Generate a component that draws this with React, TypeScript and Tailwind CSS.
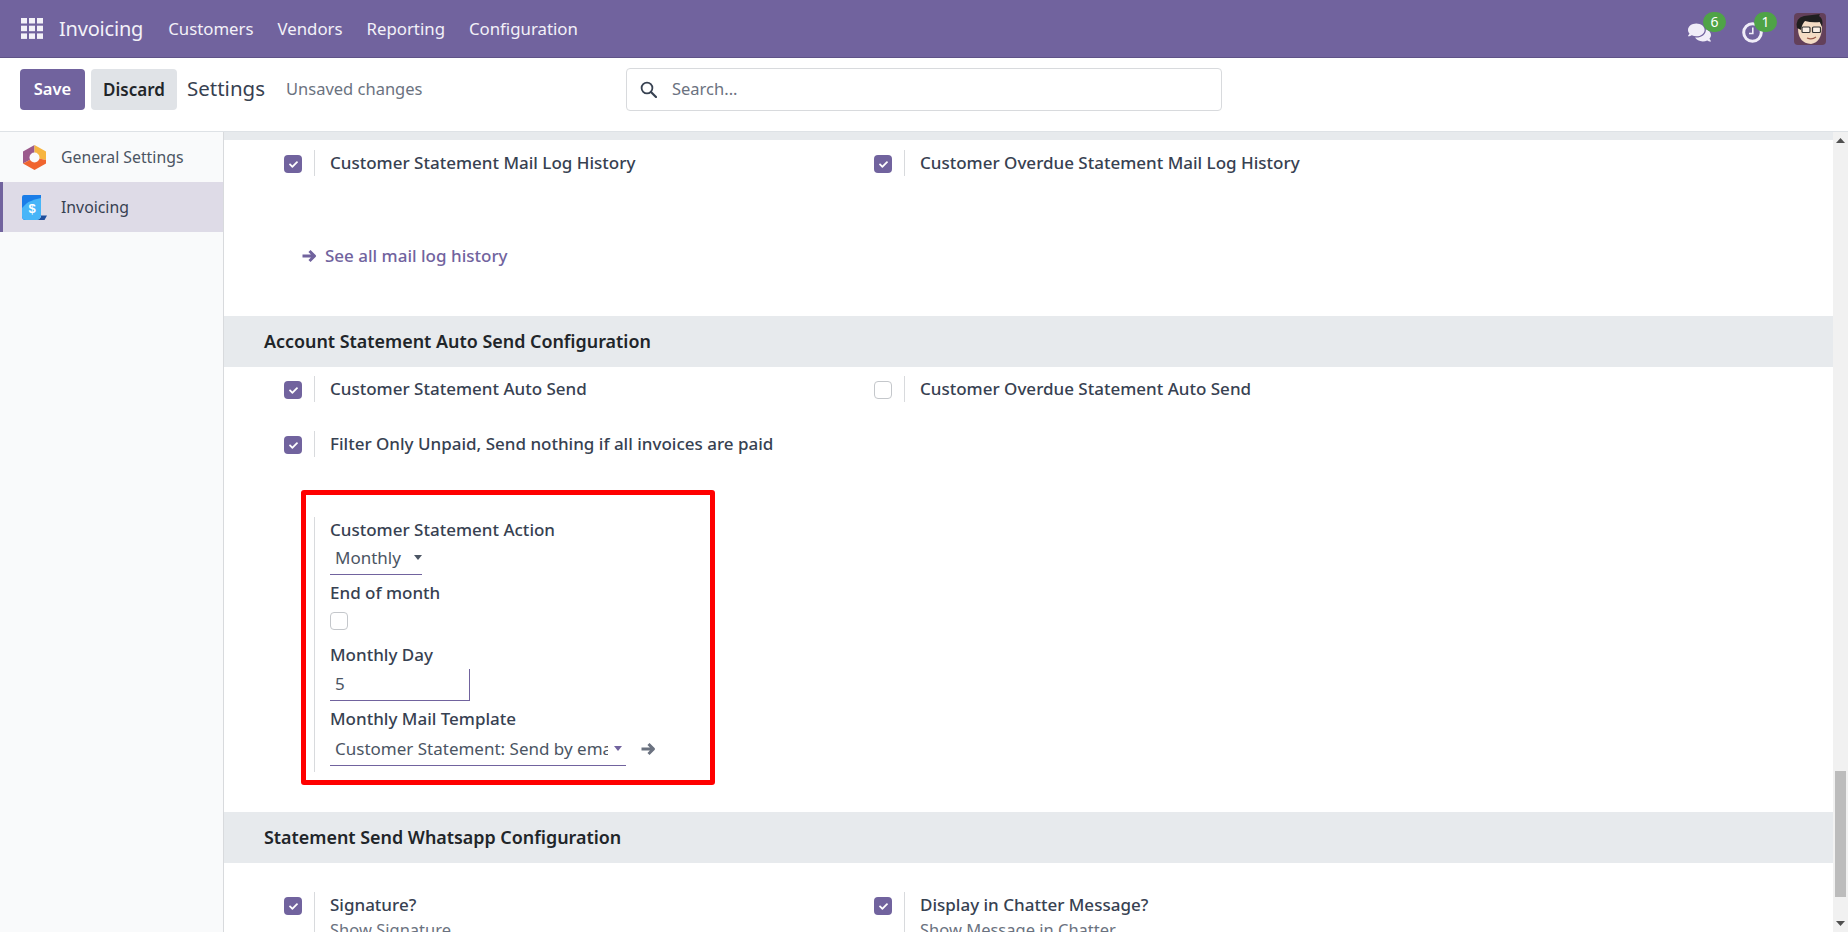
import { FaCheck, FaComments } from "react-icons/fa";

const Check = ({ on }: { on?: boolean }) =>
  on ? (
    <span className="w-[18px] h-[18px] rounded-[4px] bg-[#71639e] flex items-center justify-center text-white shrink-0">
      <FaCheck size={9} />
    </span>
  ) : (
    <span className="block w-[18px] h-[18px] rounded-[4px] border border-[#c4c7cb] bg-white shrink-0" />
  );

const Setting = ({ on, label, sub }: { on?: boolean; label: string; sub?: string }) => (
  <div className="flex w-[590px] items-start">
    <div className="w-[30px] pt-[5px] shrink-0">
      <Check on={on} />
    </div>
    <div className="border-l border-[#d8dadd] pl-[15px] min-h-[26px]">
      <div className="text-[17px] leading-[26px] font-medium text-[#374151] whitespace-nowrap">{label}</div>
      {sub && <div className="text-[16.5px] leading-[24px] text-[#6b7280] whitespace-nowrap">{sub}</div>}
    </div>
  </div>
);

const Band = ({ title }: { title: string }) => (
  <div className="h-[51px] bg-[#e7eaed] flex items-center pl-[40px] text-[17.9px] font-semibold text-[#212529]">
    {title}
  </div>
);

const Label = ({ children }: { children: string }) => (
  <div className="text-[17px] leading-[26px] font-medium text-[#374151]">{children}</div>
);

const Caret = ({ color = "#4b5563" }: { color?: string }) => (
  <svg width="8" height="5" viewBox="0 0 8 5" className="shrink-0">
    <path d="M0 0h8L4 5z" fill={color} />
  </svg>
);

const FatArrow = ({ color, className }: { color: string; className?: string }) => (
  <svg width="16" height="16" viewBox="0 0 16 16" className={className}>
    <path d="M1.500 8H13M8.500 3l5 5-5 5" stroke={color} strokeWidth="3" fill="none" strokeLinejoin="round" />
  </svg>
);

const AppsIcon = () => (
  <svg width="22" height="21" viewBox="0 0 22 21" className="shrink-0">
    <g fill="#f3f1f8">
      <rect x="0" y="0" width="6" height="5.500" />
      <rect x="8" y="0" width="6" height="5.500" />
      <rect x="16" y="0" width="6" height="5.500" />
      <rect x="0" y="7.700" width="6" height="5.500" />
      <rect x="8" y="7.700" width="6" height="5.500" />
      <rect x="16" y="7.700" width="6" height="5.500" />
      <rect x="0" y="15.400" width="6" height="5.500" />
      <rect x="8" y="15.400" width="6" height="5.500" />
      <rect x="16" y="15.400" width="6" height="5.500" />
    </g>
  </svg>
);

const ClockIcon = () => (
  <svg width="21" height="21" viewBox="0 0 21 21" className="mt-[9px]">
    <circle cx="10.500" cy="10.500" r="8.800" stroke="#f0edf8" strokeWidth="3" fill="none" />
    <path d="M10.800 5.500V11.500H7" stroke="#f0edf8" strokeWidth="1.600" fill="none" />
  </svg>
);

const SearchIcon = () => (
  <svg width="17" height="17" viewBox="0 0 17 17" className="shrink-0">
    <circle cx="7" cy="7" r="5.400" stroke="#374151" strokeWidth="1.800" fill="none" />
    <path d="M11 11l5 5" stroke="#374151" strokeWidth="2.200" strokeLinecap="round" />
  </svg>
);

const SettingsLogo = () => (
  <svg width="23" height="25" viewBox="0 0 23 25" className="shrink-0">
    <path d="M11.500 0 0 6.500V18.500L11.500 12.500z" fill="#9b5a8c" />
    <path d="M11.500 0 23 6.500V15L11.500 12.500z" fill="#f7b53f" />
    <path d="M0 18.500 11.500 25 23 18.500V15L11.500 12.500z" fill="#f0652f" />
    <circle cx="11.500" cy="12.500" r="5" fill="#f9fafb" />
  </svg>
);

const InvoiceLogo = () => (
  <svg width="25" height="25" viewBox="0 0 25 25" className="shrink-0">
    <path d="M2 0H19V21H14L7 25H3Q0 25 0 21V2Q0 0 2 0z" fill="#1a7de8" />
    <path d="M7 25H22.500L25 20.500H19V22Q17 25 14 25z" fill="#1f4f9e" />
    <path d="M0 13Q6 5 19 3V20Q19 25 14 25H4Q0 25 0 21z" fill="#47b5f8" />
    <text x="10" y="18" textAnchor="middle" fontSize="13" fontWeight="700" fill="#fff" fontFamily="Liberation Sans, sans-serif">$</text>
  </svg>
);

const Avatar = () => (
  <svg width="32" height="32" viewBox="0 0 32 32" className="rounded-[4px] shrink-0">
    <rect width="32" height="32" fill="#63405a" />
    <path d="M4 15Q4 30 17 31Q28 29 28 13L25 8H9z" fill="#f4dcc4" />
    <path d="M3 15Q1 5 10 3L26 1L25 3Q30 6 28 14L26 9Q18 10 11 8Q8 11 7 17z" fill="#1f1f1f" />
    <rect x="8" y="14" width="8" height="5.500" rx="1" fill="#ffffff" fillOpacity=".55" stroke="#333" strokeWidth="1.200" />
    <rect x="18.500" y="14" width="8" height="5.500" rx="1" fill="#ffffff" fillOpacity=".55" stroke="#333" strokeWidth="1.200" />
    <path d="M13 25Q18 27 22 24" stroke="#9a5a48" strokeWidth="1.200" fill="none" />
  </svg>
);

export default function App() {
  return (
    <div className="h-[932px] overflow-hidden flex flex-col bg-white font-['Noto_Sans',sans-serif]">
      <nav className="h-[58px] shrink-0 bg-[#71639e] border-b border-[#5f5387] flex items-center text-white pl-[21px] pr-[22px]">
        <AppsIcon />
        <span className="ml-[16px] text-[20px] tracking-[-0.2px] text-[#f3f1f8]">Invoicing</span>
        <div className="flex gap-[24px] ml-[25px] text-[16.8px] text-[#f3f1f8]">
          <span>Customers</span>
          <span>Vendors</span>
          <span>Reporting</span>
          <span>Configuration</span>
        </div>
        <div className="ml-auto flex items-center">
          <div className="relative w-[54px] h-[32px]">
            <FaComments size={23} className="text-[#f0edf8] mt-[8px]" />
            <span className="absolute left-[15px] top-[-1px] w-[23px] h-[20px] rounded-full bg-[#4fa347] text-[14px] leading-[20px] text-center">6</span>
          </div>
          <div className="relative w-[52px] h-[32px]">
            <ClockIcon />
            <span className="absolute left-[12px] top-[-1px] w-[23px] h-[20px] rounded-full bg-[#4fa347] text-[14px] leading-[20px] text-center">1</span>
          </div>
          <Avatar />
        </div>
      </nav>

      <div className="h-[74px] shrink-0 flex items-start pt-[11px] pl-[20px] border-b border-[#dee2e6]">
        <button className="h-[41px] w-[65px] rounded-[4px] bg-[#71639e] text-white text-[16.5px] font-semibold">Save</button>
        <button className="h-[41px] w-[86px] ml-[6px] rounded-[4px] bg-[#e0e3e7] text-[#212529] text-[17px] font-semibold">Discard</button>
        <span className="ml-[10px] w-[79px] text-[20.5px] leading-[39px] text-[#374151] whitespace-nowrap">Settings</span>
        <span className="ml-[20px] w-[135px] text-[16.5px] leading-[39px] text-[#6b7280] whitespace-nowrap">Unsaved changes</span>
        <div className="ml-[205px] mt-[-1px] h-[43px] w-[596px] border border-[#d8dadd] rounded-[4px] flex items-center pl-[13px]">
          <SearchIcon />
          <span className="ml-[15px] text-[16.5px] text-[#6b7280]">Search...</span>
        </div>
      </div>

      <div className="flex-1 flex min-h-0">
        <aside className="w-[224px] shrink-0 bg-[#f9fafb] border-r border-[#d8dadd]">
          <div className="h-[50px] flex items-center pl-[23px] pt-[1px] gap-[15px] text-[15.8px] text-[#4b5563]">
            <SettingsLogo />
            <span>General Settings</span>
          </div>
          <div className="h-[50px] flex items-center pl-[19px] pt-[1px] gap-[14px] text-[15.8px] text-[#374151] bg-[#dedbe7] border-l-[3px] border-[#71639e]">
            <InvoiceLogo />
            <span>Invoicing</span>
          </div>
        </aside>

        <main className="flex-1 min-w-0 flex">
          <div className="flex-1 min-w-0">
            <div className="h-[8px] bg-[#e7eaed]" />
            <div className="flex pl-[60px] pt-[10px]">
              <Setting on label="Customer Statement Mail Log History" />
              <Setting on label="Customer Overdue Statement Mail Log History" />
            </div>
            <div className="pl-[77px] mt-[67px] h-[73px] flex items-start gap-[8px] text-[17px] leading-[26px] font-medium text-[#71639e]">
              <FatArrow color="#71639e" className="mt-[5px]" />
              <span>See all mail log history</span>
            </div>
            <Band title="Account Statement Auto Send Configuration" />
            <div className="flex pl-[60px] pt-[9px]">
              <Setting on label="Customer Statement Auto Send" />
              <Setting label="Customer Overdue Statement Auto Send" />
            </div>
            <div className="flex pl-[60px] pt-[29px]">
              <Setting on label="Filter Only Unpaid, Send nothing if all invoices are paid" />
            </div>

            <div className="ml-[77px] mt-[33px] w-[414px] h-[295px] border-[5px] border-[#ff0000] rounded-[3px] pt-[22px] pl-[8px]">
              <div className="border-l border-[#d8dadd] pl-[15px] h-[255px] flex flex-col items-start">
                <Label>Customer Statement Action</Label>
                <div className="w-[92px] h-[32px] border-b border-[#71639e] flex items-center pl-[5px] pb-[2px] justify-between text-[17px] text-[#4b5563]">
                  <span>Monthly</span>
                  <Caret />
                </div>
                <div className="mt-[5px]"><Label>End of month</Label></div>
                <div className="mt-[6px]"><Check /></div>
                <div className="mt-[12px]"><Label>Monthly Day</Label></div>
                <div className="mt-[1px] w-[140px] h-[32px] border-b border-r border-[#71639e] flex items-center pl-[5px] pb-[2px] text-[17px] text-[#4b5563]">5</div>
                <div className="mt-[5px]"><Label>Monthly Mail Template</Label></div>
                <div className="flex items-center">
                  <div className="w-[296px] h-[34px] border-b border-[#71639e] flex items-center pl-[5px] pr-[4px] justify-between text-[17px] text-[#4b5563]">
                    <span className="whitespace-nowrap overflow-hidden w-[273px]">Customer Statement: Send by email</span>
                    <Caret color="#71639e" />
                  </div>
                  <FatArrow color="#6b7280" className="ml-[14px]" />
                </div>
              </div>
            </div>

            <div className="mt-[27px]"><Band title="Statement Send Whatsapp Configuration" /></div>
            <div className="flex pl-[60px] pt-[29px]">
              <Setting on label="Signature?" sub="Show Signature" />
              <Setting on label="Display in Chatter Message?" sub="Show Message in Chatter" />
            </div>
          </div>

          <div className="w-[15px] shrink-0 bg-[#f1f1f1] flex flex-col items-center relative">
            <svg width="9" height="5" viewBox="0 0 9 5" className="mt-[6px]"><path d="M0 5h9L4.500 0z" fill="#505050" /></svg>
            <div className="absolute top-[639px] left-[2px] w-[11px] h-[126px] bg-[#bcbcbc]" />
            <svg width="9" height="5" viewBox="0 0 9 5" className="mt-auto mb-[6px]"><path d="M0 0h9L4.500 5z" fill="#505050" /></svg>
          </div>
        </main>
      </div>
    </div>
  );
}
